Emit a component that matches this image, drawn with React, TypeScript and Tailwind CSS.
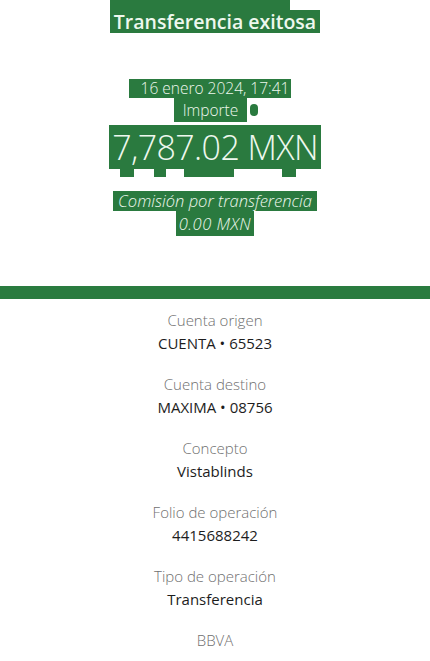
const details = [
  { label: "Cuenta origen", value: "CUENTA • 65523" },
  { label: "Cuenta destino", value: "MAXIMA • 08756" },
  { label: "Concepto", value: "Vistablinds" },
  { label: "Folio de operación", value: "4415688242" },
  { label: "Tipo de operación", value: "Transferencia" },
];

export default function App() {
  return (
    <div className="w-[430px] h-[661px] overflow-hidden bg-white font-['Open_Sans',sans-serif] flex flex-col items-center">
      <div className="w-[180px] h-[10px] bg-[#2a7a3f] -ml-[30px]" />
      <h1 className="bg-[#2a7a3f] px-[4px] h-[23px] leading-[23px] text-[19.5px] font-semibold text-[#eef8ee]">Transferencia exitosa</h1>

      <p className="mt-[46px] -ml-[10px] bg-[#2a7a3f] pl-[12px] pr-[2px] h-[19px] leading-[19px] text-[15.5px] font-light text-[#eef8ee]">16 enero 2024, 17:41</p>
      <div className="flex items-center ml-[2px]">
        <p className="bg-[#2a7a3f] px-[9px] h-[24px] leading-[24px] text-[15.5px] font-light text-[#eef8ee]">Importe</p>
        <span className="ml-[3px] w-[8px] h-[12px] bg-[#2a7a3f] rounded-full" />
      </div>
      <p className="mt-[3px] bg-[#2a7a3f] px-[3px] h-[44px] leading-[44px] text-[34px] font-light tracking-[-0.6px] text-[#eef8ee]">7,787.02 MXN</p>
      <div className="flex w-[190px]">
        <span className="w-[14px] h-[8px] bg-[#2a7a3f]" />
        <span className="w-[12px] h-[8px] bg-[#2a7a3f] ml-[20px]" />
        <span className="w-[50px] h-[8px] bg-[#2a7a3f] ml-[18px]" />
        <span className="w-[14px] h-[8px] bg-[#2a7a3f] ml-[48px]" />
      </div>

      <p className="mt-[14px] bg-[#2a7a3f] px-[5px] h-[20px] leading-[20px] text-[16.5px] font-light italic text-[#eef8ee]">Comisión por transferencia</p>
      <p className="bg-[#2a7a3f] px-[3px] h-[25px] leading-[25px] text-[16.5px] tracking-[0.5px] font-light italic text-[#eef8ee]">0.00 MXN</p>

      <div className="mt-[50px] w-full h-[13px] bg-[#2a7b3f]" />

      <div className="mt-[12px] flex flex-col items-center gap-[22px]">
        {details.map((d) => (
          <div key={d.label} className="flex flex-col items-center gap-[4px]">
            <span className="text-[15px] font-light text-[#6f6f6f] leading-[19px]">{d.label}</span>
            <span className="text-[15px] font-normal text-[#1d1d1d] leading-[19px]">{d.value}</span>
          </div>
        ))}
        <span className="text-[15px] font-light text-[#6f6f6f] leading-[19px]">BBVA</span>
      </div>
    </div>
  );
}
